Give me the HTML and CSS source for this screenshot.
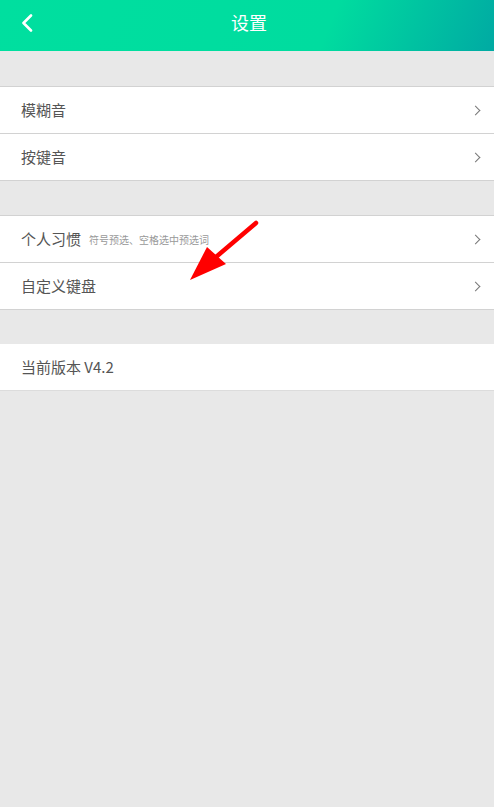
FILE: index.html
```html
<!DOCTYPE html>
<html lang="zh">
<head>
<meta charset="utf-8">
<link rel="stylesheet" href="styles.css">
</head>
<body>
<header class="topbar">
  <span class="back">
    <svg width="12" height="18" viewBox="0 0 12 18"><path d="M10 1.5 L2.5 9 L10 16.5" fill="none" stroke="#fff" stroke-width="2.6" stroke-linecap="round" stroke-linejoin="round"/></svg>
  </span>
  <h1 class="title">设置</h1>
</header>
<main class="content">
  <section class="group">
    <div class="row"><span class="label">模糊音</span><span class="chev"></span></div>
    <div class="row"><span class="label">按键音</span><span class="chev"></span></div>
  </section>
  <section class="group">
    <div class="row"><span class="label">个人习惯<small class="hint">符号预选、空格选中预选词</small></span><span class="chev"></span></div>
    <div class="row"><span class="label">自定义键盘</span><span class="chev"></span></div>
  </section>
  <section class="group version">
    <div class="row"><span class="label">当前版本 V4.2</span></div>
  </section>
  <svg class="arrow" width="80" height="70" viewBox="180 210 80 70">
    <line x1="256" y1="223" x2="216" y2="257" stroke="#ff0000" stroke-width="4.5" stroke-linecap="round"/>
    <polygon points="190,280 207,247 226,264" fill="#ff0000"/>
  </svg>
</main>
</body>
</html>
```
FILE: styles.css
```css
html, body {
  margin: 0;
  padding: 0;
}
body {
  width: 494px;
  min-height: 807px;
  background: #e8e8e8;
  font-family: "Noto Sans CJK SC", "Roboto", "Noto Sans", sans-serif;
  color: #555;
}
.topbar {
  height: 51px;
  background: linear-gradient(112deg, #00df9f 0%, #00dc9f 66%, #00aaa3 100%);
  display: flex;
  align-items: center;
  justify-content: center;
  position: relative;
}
.back {
  position: absolute;
  left: 21px;
  top: 13px;
  height: 18px;
}
.title {
  margin: 0;
  margin-top: -8px;
  margin-left: 4px;
  font-size: 18px;
  font-weight: normal;
  color: #fff;
}
.content {
  position: relative;
  padding-top: 35px;
  display: flex;
  flex-direction: column;
  gap: 34px;
}
.group {
  background: #fff;
  border-top: 1px solid #d2d2d2;
  border-bottom: 1px solid #d2d2d2;
}
.group.version {
  border-top: none;
  border-bottom: 1px solid #dcdcdc;
}
.row {
  height: 46px;
  display: flex;
  align-items: center;
  justify-content: space-between;
  padding: 0 13px 0 21px;
}
.row + .row {
  border-top: 1px solid #d2d2d2;
}
.label {
  font-size: 15px;
  color: #555;
  display: flex;
  align-items: center;
  margin-top: -2px;
}
.hint {
  font-size: 10px;
  color: #999;
  margin-left: 8px;
  margin-top: 3px;
}
.chev {
  width: 6px;
  height: 6px;
  border-top: 1.5px solid #777;
  border-right: 1.5px solid #777;
  transform: rotate(45deg);
  margin-right: 2px;
}
.arrow {
  position: absolute;
  left: 180px;
  top: 159px;
}
```
